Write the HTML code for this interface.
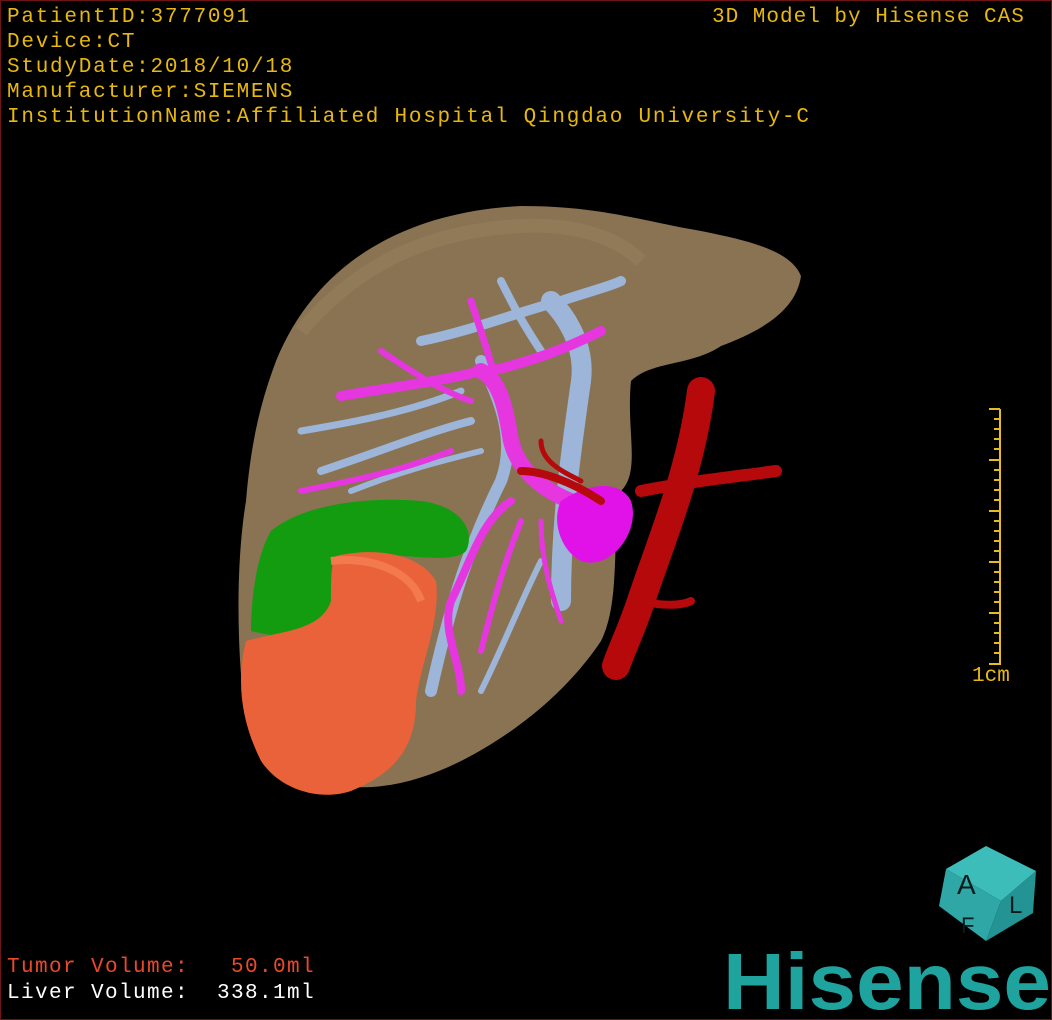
<!DOCTYPE html>
<html><head><style>
html,body{margin:0;padding:0;background:#000;}
#c{position:relative;width:1050px;height:1018px;border:1px solid #6e1414;overflow:hidden;background:#000;}
.t{position:absolute;font-family:"Liberation Mono",monospace;font-size:21px;letter-spacing:1.75px;white-space:pre;line-height:25px;}
</style></head><body><div id="c">
<svg width="1050" height="1018" style="position:absolute;left:0;top:0">
<!-- liver -->
<path d="M275,360 C320,250 420,210 520,205 C600,205 640,220 700,230 C750,240 790,250 800,275 C795,310 760,330 720,345 C690,365 650,360 630,380 C625,430 640,470 620,490 C610,540 620,600 600,640 C560,700 500,740 460,760 C420,780 380,790 340,785 C300,780 260,760 245,720 C235,650 235,560 245,500 C250,440 260,400 275,360 Z" fill="#8a7352"/>
<path d="M300,330 C360,260 430,230 520,225 C580,222 620,240 640,260" stroke="#9c845f" stroke-width="14" fill="none" opacity="0.4"/>
<!-- blue veins -->
<g stroke="#9cb5d8" fill="none" stroke-linecap="round">
<path d="M560,600 C560,520 570,450 580,380 C585,340 560,310 550,300" stroke-width="20"/>
<path d="M430,690 C450,600 470,540 500,480 C515,440 500,400 480,360" stroke-width="12"/>
<path d="M320,470 C380,450 430,430 470,420" stroke-width="8"/>
<path d="M300,430 C360,420 410,410 460,390" stroke-width="7"/>
<path d="M420,340 C470,330 520,310 560,300 C590,290 610,285 620,280" stroke-width="10"/>
<path d="M500,280 C510,300 520,320 540,350" stroke-width="8"/>
<path d="M540,560 C520,600 500,650 480,690" stroke-width="6"/>
<path d="M350,490 C400,470 440,460 480,450" stroke-width="6"/>
</g>
<!-- magenta portal -->
<g stroke="#e536e0" fill="none" stroke-linecap="round">
<path d="M600,510 C560,500 520,480 510,440 C505,410 500,380 480,370" stroke-width="16"/>
<path d="M480,370 C440,380 400,385 340,395" stroke-width="10"/>
<path d="M490,370 C530,360 560,350 600,330" stroke-width="10"/>
<path d="M470,300 C480,330 490,360 495,380" stroke-width="7"/>
<path d="M380,350 C410,370 440,390 470,400" stroke-width="6"/>
<path d="M510,500 C480,520 470,560 450,600 C440,630 460,660 460,690" stroke-width="8"/>
<path d="M520,520 C500,570 490,610 480,650" stroke-width="6"/>
<path d="M300,490 C350,480 400,470 450,450" stroke-width="6"/>
<path d="M540,520 C540,560 550,590 560,620" stroke-width="5"/>
</g>
<path d="M560,500 C590,480 620,480 630,500 C640,530 610,570 580,560 C560,550 550,520 560,500 Z" fill="#e012e8"/>
<!-- red artery -->
<g stroke="#b5090c" fill="none" stroke-linecap="round">
<path d="M700,390 C690,470 660,540 640,600 C630,630 620,650 615,665" stroke-width="28"/>
<path d="M640,490 C690,480 740,475 775,470" stroke-width="12"/>
<path d="M600,500 C570,480 540,470 520,470" stroke-width="8"/>
<path d="M540,440 C540,460 560,470 580,480" stroke-width="5"/>
<path d="M640,600 C660,605 680,605 690,600" stroke-width="8"/>
</g>
<!-- green -->
<path d="M270,530 C300,505 360,495 420,500 C460,505 475,530 465,550 C450,565 400,550 350,555 C330,570 335,615 320,630 C300,640 270,635 250,630 C250,600 255,555 270,530 Z" fill="#139c10"/>
<!-- tumor -->
<path d="M335,555 C380,545 420,555 435,580 C440,620 420,660 415,700 C415,740 400,770 350,790 C320,800 280,790 260,760 C240,720 235,680 245,640 C280,630 320,630 330,600 C330,580 330,560 335,555 Z" fill="#ea6239"/>
<path d="M330,560 C370,555 410,570 420,600" stroke="#f37a4e" stroke-width="8" fill="none"/>
<!-- scale bar -->
<g stroke="#e7bd1e" stroke-width="2">
<line x1="999" y1="408" x2="999" y2="664"/>
<line x1="988" y1="408" x2="999" y2="408"/>
<line x1="988" y1="459" x2="999" y2="459"/>
<line x1="988" y1="510" x2="999" y2="510"/>
<line x1="988" y1="561" x2="999" y2="561"/>
<line x1="988" y1="612" x2="999" y2="612"/>
<line x1="988" y1="663" x2="999" y2="663"/>
<path d="M993,418h6M993,428h6M993,438h6M993,448h6M993,469h6M993,479h6M993,489h6M993,499h6M993,520h6M993,530h6M993,540h6M993,550h6M993,571h6M993,581h6M993,591h6M993,601h6M993,622h6M993,632h6M993,642h6M993,652h6"/>
</g>
<!-- AF cube -->
<polygon points="945,868 985,845 1035,870 1000,900" fill="#3dbdb9"/>
<polygon points="945,868 1000,900 985,940 938,905" fill="#2ea7a6"/>
<polygon points="1000,900 1035,870 1032,912 985,940" fill="#239493"/>
<text x="956" y="893" font-family="Liberation Sans,sans-serif" font-size="28" fill="#0b1a1a">A</text>
<text x="960" y="932" font-family="Liberation Sans,sans-serif" font-size="22" fill="#0b1a1a">F</text>
<text x="1008" y="912" font-family="Liberation Sans,sans-serif" font-size="24" fill="#0b1a1a">L</text>
<text x="722" y="1008" font-family="Liberation Sans,sans-serif" font-weight="bold" font-size="80" fill="#1fa39e" textLength="328" lengthAdjust="spacingAndGlyphs">Hisense</text>
</svg>
<div class="t" style="left:6px;top:4px;color:#e8b80f">PatientID:3777091
Device:CT
StudyDate:2018/10/18
Manufacturer:SIEMENS
InstitutionName:Affiliated Hospital Qingdao University-C</div>
<div class="t" style="left:711px;top:4px;color:#e8b80f;letter-spacing:1px">3D Model by Hisense CAS</div>
<div class="t" style="left:971px;top:663px;color:#e8b80f;letter-spacing:0">1cm</div>
<div class="t" style="left:6px;top:954px;color:#ea4a2a;letter-spacing:1.4px">Tumor Volume:   50.0ml</div>
<div class="t" style="left:6px;top:980px;color:#fff;letter-spacing:1.4px">Liver Volume:  338.1ml</div>
</div></body></html>
